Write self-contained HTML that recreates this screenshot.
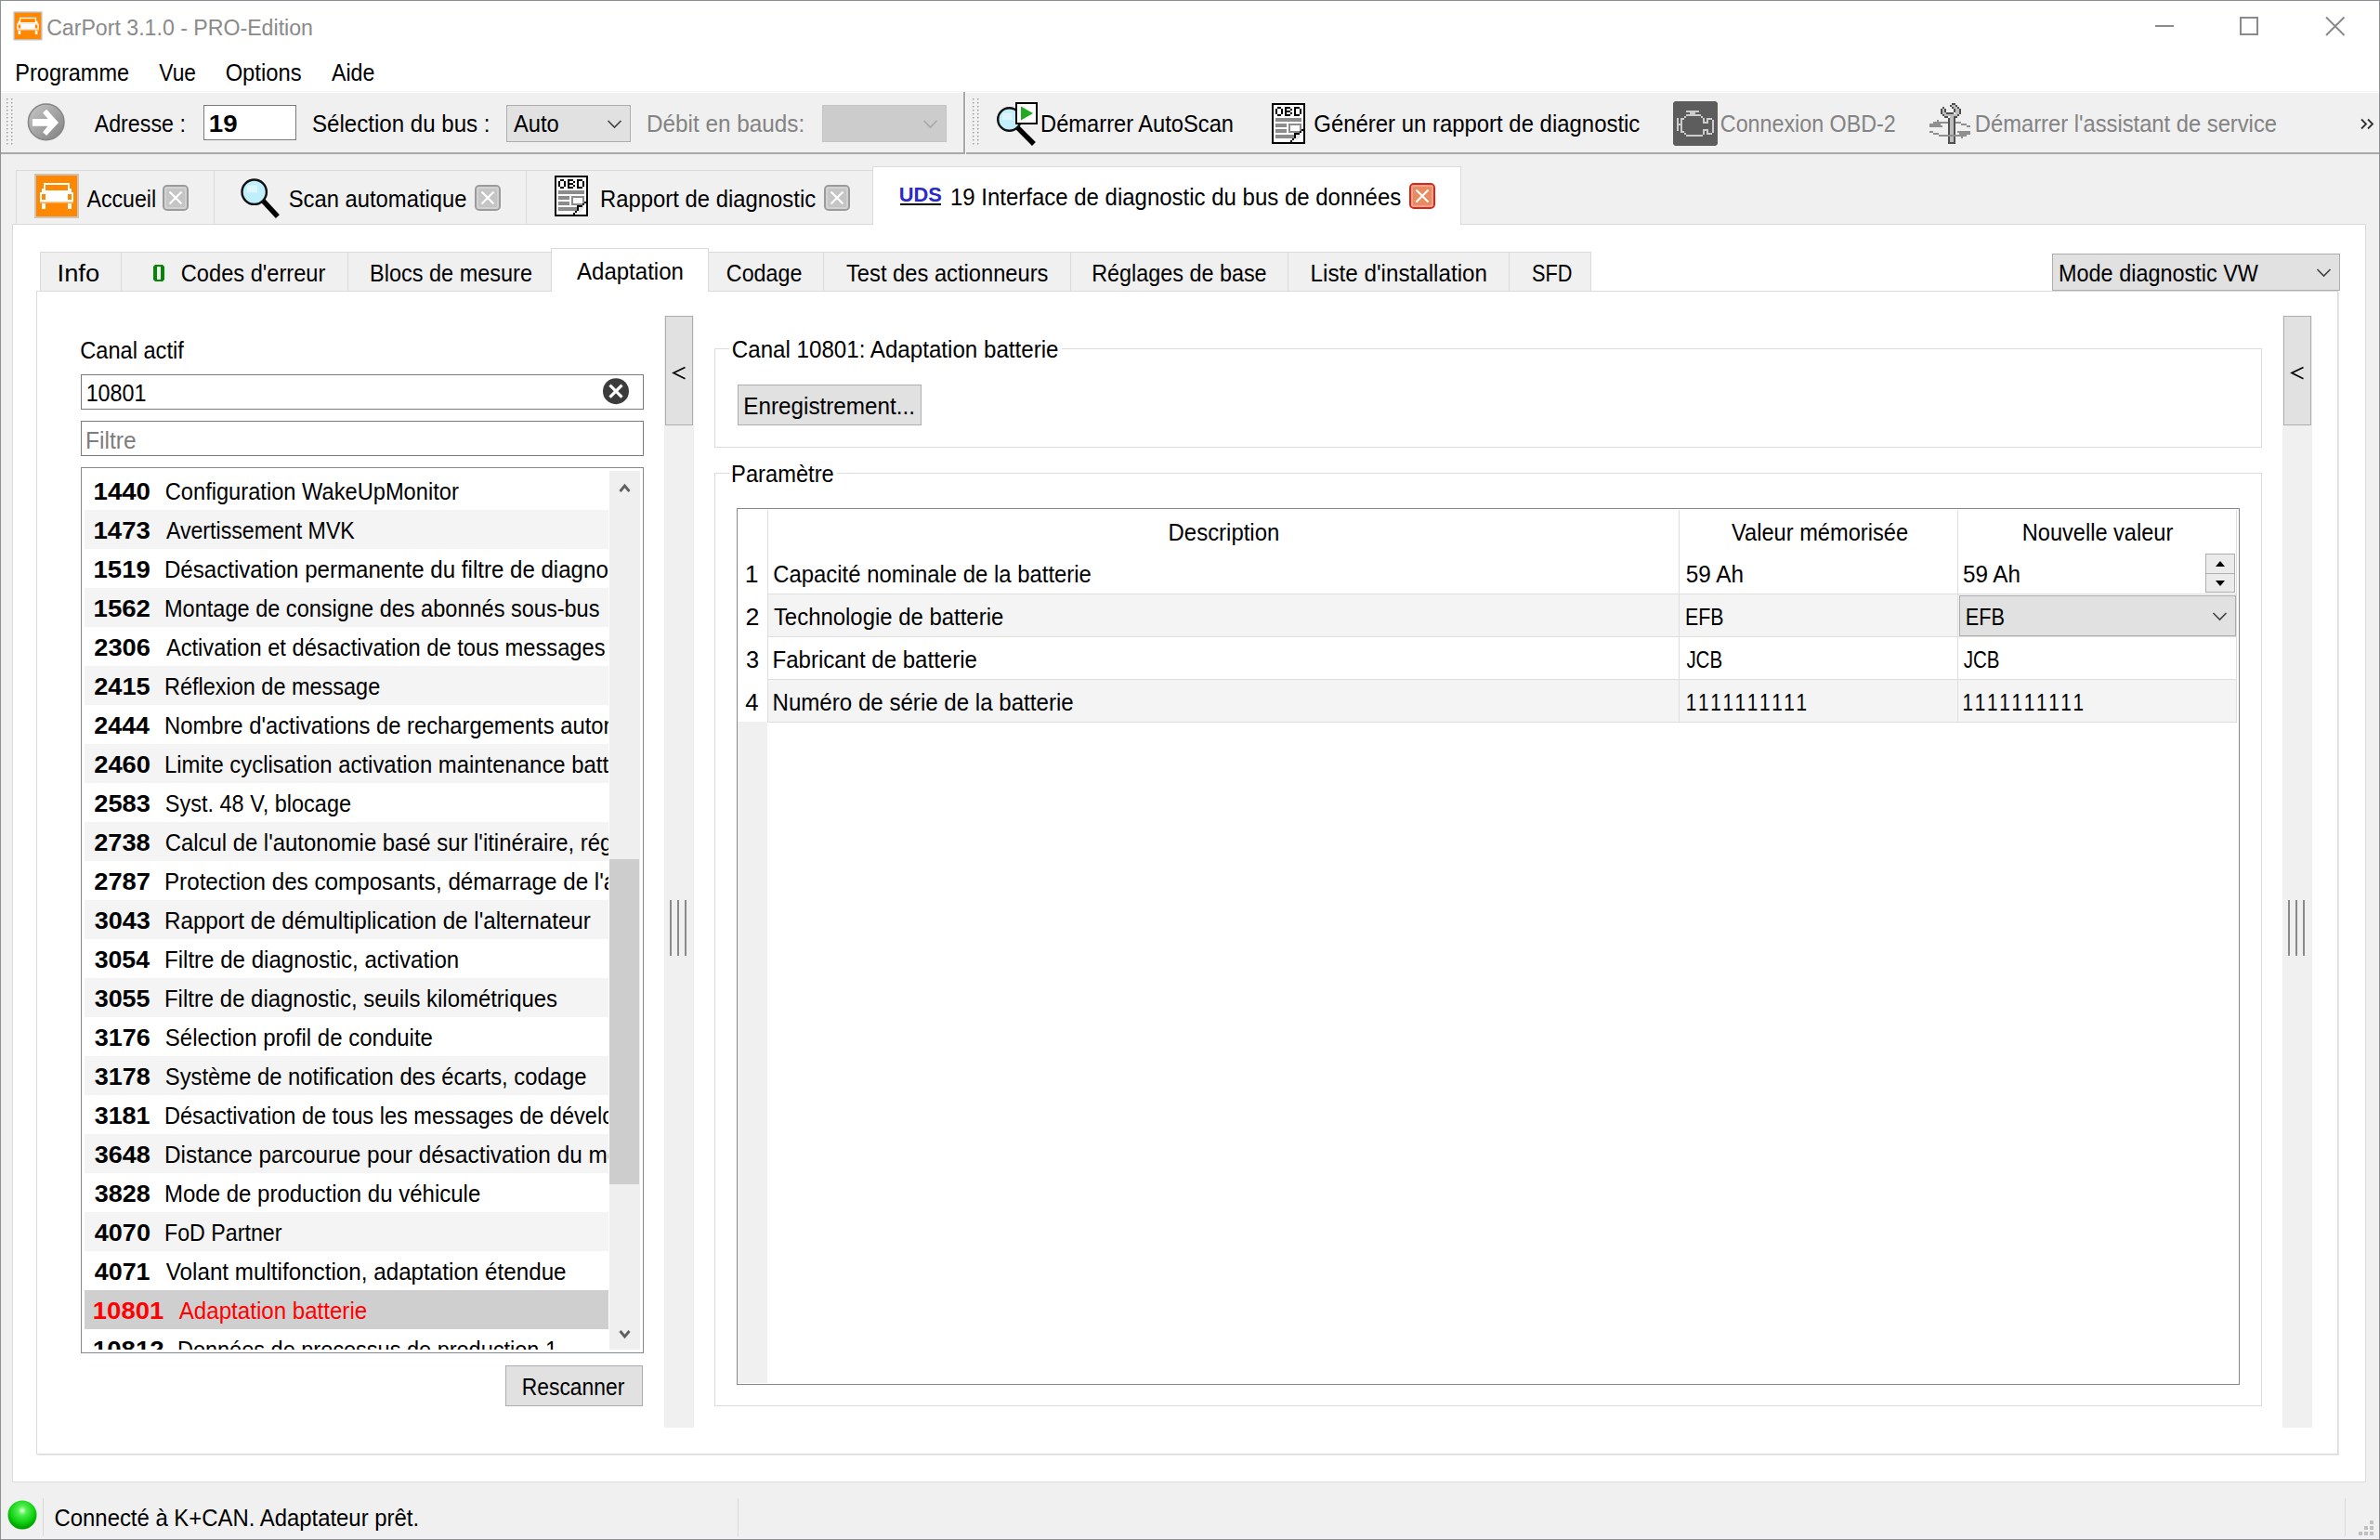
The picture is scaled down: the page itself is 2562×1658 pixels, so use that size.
<!DOCTYPE html><html><head><meta charset="utf-8"><style>
html,body{margin:0;padding:0;width:2562px;height:1658px;overflow:hidden;background:#fff;}
body>div{position:absolute;box-sizing:border-box;}
svg{position:absolute;left:0;top:0;}
text{font-family:"Liberation Sans",sans-serif;}
</style></head><body>
<div style="left:0px;top:0px;width:2562px;height:1658px;background:#ffffff;"></div>
<div style="left:1px;top:99px;width:2560px;height:1558px;background:#f0f0f0;"></div>
<div style="left:2320px;top:27px;width:20px;height:2px;background:#8a8a8a;"></div>
<div style="left:1px;top:98px;width:2560px;height:1px;background:#f3f3f3;"></div>
<div style="left:1px;top:99px;width:2560px;height:1px;background:#fdfdfd;"></div>
<div style="left:1px;top:164px;width:1037px;height:2px;background:#a8a8a8;"></div>
<div style="left:1040px;top:164px;width:1521px;height:2px;background:#a8a8a8;"></div>
<div style="left:1037px;top:99px;width:2px;height:67px;background:#a8a8a8;"></div>
<div style="left:1039px;top:99px;width:1px;height:67px;background:#ffffff;"></div>
<div style="left:219px;top:113px;width:100px;height:38px;background:#ffffff;border:1px solid #7a7a7a;"></div>
<div style="left:545px;top:113px;width:134px;height:40px;background:#e1e1e1;border:1px solid #adadad;"></div>
<div style="left:885px;top:113px;width:134px;height:40px;background:#cccccc;border:1px solid #c4c4c4;"></div>
<div style="left:13px;top:241px;width:2534px;height:1355px;background:#ffffff;border:1px solid #dadada;"></div>
<div style="left:17px;top:183px;width:923px;height:59px;background:#f0f0f0;"></div>
<div style="left:17px;top:183px;width:922px;height:1px;background:#dadada;"></div>
<div style="left:17px;top:183px;width:1px;height:58px;background:#dadada;"></div>
<div style="left:230px;top:184px;width:1px;height:57px;background:#dadada;"></div>
<div style="left:566px;top:184px;width:1px;height:57px;background:#dadada;"></div>
<div style="left:13px;top:241px;width:926px;height:1px;background:#dadada;"></div>
<div style="left:939px;top:179px;width:634px;height:63px;background:#ffffff;"></div>
<div style="left:939px;top:179px;width:634px;height:1px;background:#dadada;"></div>
<div style="left:939px;top:179px;width:1px;height:63px;background:#dadada;"></div>
<div style="left:1572px;top:179px;width:1px;height:63px;background:#dadada;"></div>
<div style="left:969px;top:219px;width:44px;height:2px;background:#000000;"></div>
<div style="left:39px;top:313px;width:2478px;height:1253px;background:#ffffff;border:1px solid #dadada;"></div>
<div style="left:2517px;top:315px;width:1px;height:1252px;background:#e8e8e8;"></div>
<div style="left:41px;top:1566px;width:2477px;height:1px;background:#e8e8e8;"></div>
<div style="left:43px;top:271px;width:550px;height:43px;background:#f0f0f0;"></div>
<div style="left:762px;top:271px;width:951px;height:43px;background:#f0f0f0;"></div>
<div style="left:43px;top:271px;width:550px;height:1px;background:#dadada;"></div>
<div style="left:762px;top:271px;width:951px;height:1px;background:#dadada;"></div>
<div style="left:43px;top:271px;width:1px;height:42px;background:#dadada;"></div>
<div style="left:130px;top:271px;width:1px;height:42px;background:#dadada;"></div>
<div style="left:374px;top:271px;width:1px;height:42px;background:#dadada;"></div>
<div style="left:886px;top:271px;width:1px;height:42px;background:#dadada;"></div>
<div style="left:1152px;top:271px;width:1px;height:42px;background:#dadada;"></div>
<div style="left:1386px;top:271px;width:1px;height:42px;background:#dadada;"></div>
<div style="left:1624px;top:271px;width:1px;height:42px;background:#dadada;"></div>
<div style="left:1712px;top:271px;width:1px;height:42px;background:#dadada;"></div>
<div style="left:39px;top:313px;width:2478px;height:1px;background:#dadada;"></div>
<div style="left:593px;top:267px;width:170px;height:47px;background:#ffffff;"></div>
<div style="left:593px;top:267px;width:170px;height:1px;background:#dadada;"></div>
<div style="left:593px;top:267px;width:1px;height:47px;background:#dadada;"></div>
<div style="left:762px;top:267px;width:1px;height:47px;background:#dadada;"></div>
<div style="left:2209px;top:273px;width:310px;height:40px;background:#e1e1e1;border:1px solid #adadad;"></div>
<div style="left:87px;top:403px;width:606px;height:38px;background:#ffffff;border:1px solid #7a7a7a;"></div>
<div style="left:87px;top:453px;width:606px;height:38px;background:#ffffff;border:1px solid #7a7a7a;"></div>
<div style="left:87px;top:503px;width:606px;height:954px;background:#ffffff;border:1px solid #828790;"></div>
<div style="left:91px;top:549px;width:564px;height:42px;background:#f4f4f4;"></div>
<div style="left:91px;top:633px;width:564px;height:42px;background:#f4f4f4;"></div>
<div style="left:91px;top:717px;width:564px;height:42px;background:#f4f4f4;"></div>
<div style="left:91px;top:801px;width:564px;height:42px;background:#f4f4f4;"></div>
<div style="left:91px;top:885px;width:564px;height:42px;background:#f4f4f4;"></div>
<div style="left:91px;top:969px;width:564px;height:42px;background:#f4f4f4;"></div>
<div style="left:91px;top:1053px;width:564px;height:42px;background:#f4f4f4;"></div>
<div style="left:91px;top:1137px;width:564px;height:42px;background:#f4f4f4;"></div>
<div style="left:91px;top:1221px;width:564px;height:42px;background:#f4f4f4;"></div>
<div style="left:91px;top:1305px;width:564px;height:42px;background:#f4f4f4;"></div>
<div style="left:91px;top:1389px;width:564px;height:42px;background:#cfcfcf;"></div>
<div style="left:656px;top:507px;width:33px;height:946px;background:#efefef;"></div>
<div style="left:656px;top:925px;width:32px;height:350px;background:#cdcdcd;"></div>
<div style="left:544px;top:1470px;width:148px;height:44px;background:#e1e1e1;border:1px solid #adadad;"></div>
<div style="left:715px;top:340px;width:32px;height:1197px;background:#f0f0f0;"></div>
<div style="left:716px;top:340px;width:30px;height:118px;background:#e1e1e1;border:1px solid #adadad;"></div>
<div style="left:721px;top:969px;width:2px;height:60px;background:#8a8a8a;"></div>
<div style="left:729px;top:969px;width:2px;height:60px;background:#8a8a8a;"></div>
<div style="left:737px;top:969px;width:2px;height:60px;background:#8a8a8a;"></div>
<div style="left:2457px;top:340px;width:32px;height:1197px;background:#f0f0f0;"></div>
<div style="left:2458px;top:340px;width:30px;height:118px;background:#e1e1e1;border:1px solid #adadad;"></div>
<div style="left:2463px;top:969px;width:2px;height:60px;background:#8a8a8a;"></div>
<div style="left:2471px;top:969px;width:2px;height:60px;background:#8a8a8a;"></div>
<div style="left:2479px;top:969px;width:2px;height:60px;background:#8a8a8a;"></div>
<div style="left:769px;top:375px;width:1666px;height:107px;border:1px solid #dcdcdc;"></div>
<div style="left:785px;top:370px;width:358px;height:10px;background:#ffffff;"></div>
<div style="left:794px;top:414px;width:198px;height:44px;background:#e1e1e1;border:1px solid #adadad;"></div>
<div style="left:769px;top:509px;width:1666px;height:1005px;border:1px solid #dcdcdc;"></div>
<div style="left:785px;top:504px;width:116px;height:10px;background:#ffffff;"></div>
<div style="left:793px;top:547px;width:1618px;height:944px;background:#ffffff;border:1px solid #828790;"></div>
<div style="left:794px;top:777px;width:32px;height:712px;background:#f0f0f0;"></div>
<div style="left:827px;top:640px;width:1581px;height:45px;background:#f4f4f4;"></div>
<div style="left:827px;top:732px;width:1581px;height:45px;background:#f4f4f4;"></div>
<div style="left:827px;top:639px;width:1581px;height:1px;background:#dedede;"></div>
<div style="left:827px;top:685px;width:1581px;height:1px;background:#dedede;"></div>
<div style="left:827px;top:731px;width:1581px;height:1px;background:#dedede;"></div>
<div style="left:827px;top:777px;width:1581px;height:1px;background:#dedede;"></div>
<div style="left:826px;top:549px;width:1px;height:229px;background:#dedede;"></div>
<div style="left:1807px;top:549px;width:1px;height:229px;background:#dedede;"></div>
<div style="left:2107px;top:549px;width:1px;height:229px;background:#dedede;"></div>
<div style="left:2407px;top:549px;width:1px;height:229px;background:#dedede;"></div>
<div style="left:2374px;top:596px;width:32px;height:42px;background:#ebebeb;border:1px solid #adadad;"></div>
<div style="left:2375px;top:617px;width:30px;height:1px;background:#adadad;"></div>
<div style="left:2109px;top:641px;width:298px;height:44px;background:#e1e1e1;border:1px solid #adadad;"></div>
<div style="left:46px;top:1613px;width:1px;height:41px;background:#d9d9d9;"></div>
<div style="left:794px;top:1613px;width:1px;height:41px;background:#d9d9d9;"></div>
<div style="left:2524px;top:1613px;width:1px;height:41px;background:#d9d9d9;"></div>
<div style="left:2551px;top:1637px;width:4px;height:4px;background:#c0c0c0;"></div>
<div style="left:2545px;top:1643px;width:4px;height:4px;background:#c0c0c0;"></div>
<div style="left:2551px;top:1643px;width:4px;height:4px;background:#c0c0c0;"></div>
<div style="left:2539px;top:1649px;width:4px;height:4px;background:#c0c0c0;"></div>
<div style="left:2545px;top:1649px;width:4px;height:4px;background:#c0c0c0;"></div>
<div style="left:2551px;top:1649px;width:4px;height:4px;background:#c0c0c0;"></div>
<div style="left:0px;top:0px;width:2562px;height:1px;background:#8e8e95;"></div>
<div style="left:0px;top:0px;width:1px;height:1658px;background:#8e8e95;"></div>
<div style="left:2561px;top:0px;width:1px;height:1658px;background:#8e8e95;"></div>
<div style="left:0px;top:1657px;width:2562px;height:1px;background:#8e8e95;"></div>
<svg width="2562" height="1658" viewBox="0 0 2562 1658">
<g transform="translate(14.4,12.3) scale(0.65)"><rect x="0" y="0" width="48" height="48" fill="#c2c8d0"/><rect x="2" y="2" width="44" height="44" fill="#ff8800"/><g fill="#fff" transform="translate(2,2)"><rect x="10" y="8" width="24" height="2"/><rect x="8" y="8" width="2" height="8"/><rect x="34" y="8" width="2" height="8"/><rect x="6" y="14" width="2" height="4"/><rect x="36" y="14" width="2" height="4"/><rect x="6" y="16" width="32" height="2"/><rect x="4" y="18" width="36" height="10"/><rect x="6" y="30" width="4" height="6"/><rect x="34" y="30" width="4" height="6"/></g><g fill="#ff8800" transform="translate(2,2)"><rect x="6" y="20" width="4" height="6"/><rect x="34" y="20" width="4" height="6"/></g><g fill="#ffc890" transform="translate(2,2)"><rect x="4" y="28" width="36" height="1.5"/></g></g>
<text x="50.14" y="37.80" font-size="24.42" fill="#8a8a8a" textLength="286.82" lengthAdjust="spacingAndGlyphs">CarPort 3.1.0 - PRO-Edition</text>
<rect x="2412" y="19" width="18" height="18" fill="none" stroke="#8a8a8a" stroke-width="2"/>
<path d="M2504,18.5 L2523.5,38 M2523.5,18.5 L2504,38" stroke="#8a8a8a" stroke-width="2" fill="none"/>
<text x="16.32" y="87.00" font-size="26.16" fill="#000" textLength="122.80" lengthAdjust="spacingAndGlyphs">Programme</text>
<text x="171.29" y="87.00" font-size="26.16" fill="#000" textLength="39.68" lengthAdjust="spacingAndGlyphs">Vue</text>
<text x="242.63" y="87.00" font-size="26.16" fill="#000" textLength="81.93" lengthAdjust="spacingAndGlyphs">Options</text>
<text x="357.00" y="87.00" font-size="26.16" fill="#000" textLength="46.36" lengthAdjust="spacingAndGlyphs">Aide</text>
<g fill="#a0a0a0"><rect x="7" y="106" width="1.5" height="1.5"/><rect x="12" y="106" width="1.5" height="1.5"/><rect x="7" y="110" width="1.5" height="1.5"/><rect x="12" y="110" width="1.5" height="1.5"/><rect x="7" y="114" width="1.5" height="1.5"/><rect x="12" y="114" width="1.5" height="1.5"/><rect x="7" y="118" width="1.5" height="1.5"/><rect x="12" y="118" width="1.5" height="1.5"/><rect x="7" y="122" width="1.5" height="1.5"/><rect x="12" y="122" width="1.5" height="1.5"/><rect x="7" y="126" width="1.5" height="1.5"/><rect x="12" y="126" width="1.5" height="1.5"/><rect x="7" y="130" width="1.5" height="1.5"/><rect x="12" y="130" width="1.5" height="1.5"/><rect x="7" y="134" width="1.5" height="1.5"/><rect x="12" y="134" width="1.5" height="1.5"/><rect x="7" y="138" width="1.5" height="1.5"/><rect x="12" y="138" width="1.5" height="1.5"/><rect x="7" y="142" width="1.5" height="1.5"/><rect x="12" y="142" width="1.5" height="1.5"/><rect x="7" y="146" width="1.5" height="1.5"/><rect x="12" y="146" width="1.5" height="1.5"/><rect x="7" y="150" width="1.5" height="1.5"/><rect x="12" y="150" width="1.5" height="1.5"/><rect x="7" y="154" width="1.5" height="1.5"/><rect x="12" y="154" width="1.5" height="1.5"/></g>
<g fill="#ffffff"><rect x="8.5" y="107.5" width="1" height="1"/><rect x="13.5" y="107.5" width="1" height="1"/><rect x="8.5" y="111.5" width="1" height="1"/><rect x="13.5" y="111.5" width="1" height="1"/><rect x="8.5" y="115.5" width="1" height="1"/><rect x="13.5" y="115.5" width="1" height="1"/><rect x="8.5" y="119.5" width="1" height="1"/><rect x="13.5" y="119.5" width="1" height="1"/><rect x="8.5" y="123.5" width="1" height="1"/><rect x="13.5" y="123.5" width="1" height="1"/><rect x="8.5" y="127.5" width="1" height="1"/><rect x="13.5" y="127.5" width="1" height="1"/><rect x="8.5" y="131.5" width="1" height="1"/><rect x="13.5" y="131.5" width="1" height="1"/><rect x="8.5" y="135.5" width="1" height="1"/><rect x="13.5" y="135.5" width="1" height="1"/><rect x="8.5" y="139.5" width="1" height="1"/><rect x="13.5" y="139.5" width="1" height="1"/><rect x="8.5" y="143.5" width="1" height="1"/><rect x="13.5" y="143.5" width="1" height="1"/><rect x="8.5" y="147.5" width="1" height="1"/><rect x="13.5" y="147.5" width="1" height="1"/><rect x="8.5" y="151.5" width="1" height="1"/><rect x="13.5" y="151.5" width="1" height="1"/><rect x="8.5" y="155.5" width="1" height="1"/><rect x="13.5" y="155.5" width="1" height="1"/></g>
<g fill="#a0a0a0"><rect x="1047" y="106" width="1.5" height="1.5"/><rect x="1052" y="106" width="1.5" height="1.5"/><rect x="1047" y="110" width="1.5" height="1.5"/><rect x="1052" y="110" width="1.5" height="1.5"/><rect x="1047" y="114" width="1.5" height="1.5"/><rect x="1052" y="114" width="1.5" height="1.5"/><rect x="1047" y="118" width="1.5" height="1.5"/><rect x="1052" y="118" width="1.5" height="1.5"/><rect x="1047" y="122" width="1.5" height="1.5"/><rect x="1052" y="122" width="1.5" height="1.5"/><rect x="1047" y="126" width="1.5" height="1.5"/><rect x="1052" y="126" width="1.5" height="1.5"/><rect x="1047" y="130" width="1.5" height="1.5"/><rect x="1052" y="130" width="1.5" height="1.5"/><rect x="1047" y="134" width="1.5" height="1.5"/><rect x="1052" y="134" width="1.5" height="1.5"/><rect x="1047" y="138" width="1.5" height="1.5"/><rect x="1052" y="138" width="1.5" height="1.5"/><rect x="1047" y="142" width="1.5" height="1.5"/><rect x="1052" y="142" width="1.5" height="1.5"/><rect x="1047" y="146" width="1.5" height="1.5"/><rect x="1052" y="146" width="1.5" height="1.5"/><rect x="1047" y="150" width="1.5" height="1.5"/><rect x="1052" y="150" width="1.5" height="1.5"/><rect x="1047" y="154" width="1.5" height="1.5"/><rect x="1052" y="154" width="1.5" height="1.5"/></g>
<g fill="#ffffff"><rect x="1048.5" y="107.5" width="1" height="1"/><rect x="1053.5" y="107.5" width="1" height="1"/><rect x="1048.5" y="111.5" width="1" height="1"/><rect x="1053.5" y="111.5" width="1" height="1"/><rect x="1048.5" y="115.5" width="1" height="1"/><rect x="1053.5" y="115.5" width="1" height="1"/><rect x="1048.5" y="119.5" width="1" height="1"/><rect x="1053.5" y="119.5" width="1" height="1"/><rect x="1048.5" y="123.5" width="1" height="1"/><rect x="1053.5" y="123.5" width="1" height="1"/><rect x="1048.5" y="127.5" width="1" height="1"/><rect x="1053.5" y="127.5" width="1" height="1"/><rect x="1048.5" y="131.5" width="1" height="1"/><rect x="1053.5" y="131.5" width="1" height="1"/><rect x="1048.5" y="135.5" width="1" height="1"/><rect x="1053.5" y="135.5" width="1" height="1"/><rect x="1048.5" y="139.5" width="1" height="1"/><rect x="1053.5" y="139.5" width="1" height="1"/><rect x="1048.5" y="143.5" width="1" height="1"/><rect x="1053.5" y="143.5" width="1" height="1"/><rect x="1048.5" y="147.5" width="1" height="1"/><rect x="1053.5" y="147.5" width="1" height="1"/><rect x="1048.5" y="151.5" width="1" height="1"/><rect x="1053.5" y="151.5" width="1" height="1"/><rect x="1048.5" y="155.5" width="1" height="1"/><rect x="1053.5" y="155.5" width="1" height="1"/></g>
<defs><linearGradient id="ga" x1="0" y1="0" x2="1" y2="1"><stop offset="0" stop-color="#c8c8c8"/><stop offset="1" stop-color="#808080"/></linearGradient><radialGradient id="led" cx="0.5" cy="0.35" r="0.6"><stop offset="0" stop-color="#e0ffe0"/><stop offset="0.25" stop-color="#50f050"/><stop offset="0.7" stop-color="#10d010"/><stop offset="1" stop-color="#00a000"/></radialGradient><radialGradient id="lens" cx="0.4" cy="0.35" r="0.7"><stop offset="0" stop-color="#ffffff"/><stop offset="0.5" stop-color="#c8eefc"/><stop offset="1" stop-color="#8fd0ee"/></radialGradient></defs>
<circle cx="49.7" cy="131.4" r="19.3" fill="url(#ga)" stroke="#858585" stroke-width="1.5"/>
<path d="M34.9,128.1 L51.5,128.1 L46,121.5 L50.1,117.7 L63,131.9 L50.1,146.1 L46,142.3 L51.5,135.7 L34.9,135.7 Z" fill="#ffffff"/>
<text x="101.70" y="142.00" font-size="26.16" fill="#000" textLength="98.17" lengthAdjust="spacingAndGlyphs">Adresse :</text>
<text x="224.84" y="142.00" font-size="26.16" font-weight="bold" fill="#000" textLength="30.79" lengthAdjust="spacingAndGlyphs">19</text>
<text x="335.92" y="142.00" font-size="26.16" fill="#000" textLength="191.65" lengthAdjust="spacingAndGlyphs">Sélection du bus :</text>
<text x="553.00" y="142.00" font-size="26.16" fill="#000" textLength="48.80" lengthAdjust="spacingAndGlyphs">Auto</text>
<path d="M654.5,130.0 L661.5,137.0 L668.5,130.0" fill="none" stroke="#404040" stroke-width="1.6"/>
<text x="696.06" y="142.00" font-size="26.16" fill="#838383" textLength="170.13" lengthAdjust="spacingAndGlyphs">Débit en bauds:</text>
<path d="M994.5,130.0 L1001.5,137.0 L1008.5,130.0" fill="none" stroke="#a8a8a8" stroke-width="1.6"/>
<path d="M1095.356,137.356 L1111,153" stroke="#000" stroke-width="5.5" stroke-linecap="square"/>
<circle cx="1086.5" cy="128.5" r="12.3" fill="#c0eefa" stroke="#111" stroke-width="2.4"/>
<rect x="1079.12" y="121.735" width="10.455" height="7.38" fill="#ddf6fc"/>
<rect x="1094" y="111" width="22" height="22" fill="#fff" stroke="#000" stroke-width="2"/>
<path d="M1099,114.5 L1112,122 L1099,129.5 Z" fill="#22aa22"/>
<text x="1120.11" y="142.00" font-size="26.16" fill="#000" textLength="207.86" lengthAdjust="spacingAndGlyphs">Démarrer AutoScan</text>
<g transform="translate(1369,111)" shape-rendering="crispEdges"><rect x="0" y="0" width="36" height="44" fill="#000"/><rect x="2" y="2" width="32" height="40" fill="#fff"/><g fill="#000"><rect x="6" y="4" width="4" height="2"/><rect x="4" y="6" width="2" height="6"/><rect x="10" y="6" width="2" height="6"/><rect x="6" y="12" width="4" height="2"/><rect x="14" y="4" width="2" height="10"/><rect x="16" y="4" width="4" height="2"/><rect x="16" y="8" width="4" height="2"/><rect x="16" y="12" width="4" height="2"/><rect x="20" y="6" width="2" height="2"/><rect x="20" y="10" width="2" height="2"/><rect x="24" y="4" width="2" height="10"/><rect x="26" y="4" width="4" height="2"/><rect x="26" y="12" width="4" height="2"/><rect x="30" y="6" width="2" height="6"/></g><g fill="#8c8c8c"><rect x="4" y="16" width="28" height="3.5"/><rect x="4" y="22" width="12" height="3.5"/><rect x="4" y="28" width="12" height="3.5"/><rect x="4" y="34" width="20" height="3.5"/><rect x="18" y="22" width="14" height="10"/></g><rect x="20" y="24" width="10" height="6" fill="#fff"/><path d="M26,34 L34,34 L34,42 L26,42 Z" fill="#e6e6e6"/><g fill="#000"><rect x="32" y="28" width="2" height="2"/><rect x="30" y="30" width="2" height="2"/><rect x="24" y="32" width="6" height="2"/><rect x="24" y="34" width="2" height="4"/><rect x="22" y="38" width="2" height="2"/><rect x="20" y="40" width="2" height="2"/></g><path d="M34,30 L34,42 L22,42 Z" fill="#fff"/><path d="M26,34 L32,34 L26,40 Z" fill="#e6e6e6"/><g fill="#000"><rect x="32" y="28" width="2" height="2"/><rect x="30" y="30" width="2" height="2"/><rect x="24" y="32" width="6" height="2"/><rect x="24" y="34" width="2" height="4"/><rect x="22" y="38" width="2" height="2"/><rect x="20" y="40" width="2" height="2"/><rect x="34" y="0" width="2" height="44"/><rect x="0" y="42" width="36" height="2"/></g></g>
<text x="1414.30" y="142.00" font-size="26.16" fill="#000" textLength="351.02" lengthAdjust="spacingAndGlyphs">Générer un rapport de diagnostic</text>
<path d="M1803,109 L1847,109 L1849,111 L1849,155 L1847,157 L1803,157 L1801,155 L1801,111 Z" fill="#5d5d5d"/>
<g transform="translate(1795,104) scale(1.0)" fill="#cccccc" shape-rendering="crispEdges"><rect x="20" y="15" width="14" height="2"/><rect x="24" y="17" width="6" height="2"/><rect x="20" y="19" width="16" height="2"/><rect x="18" y="21" width="2" height="2"/><rect x="14" y="23" width="4" height="2"/><rect x="14" y="25" width="2" height="14"/><rect x="14" y="37" width="4" height="2"/><rect x="18" y="39" width="2" height="2"/><rect x="20" y="41" width="18" height="2"/><rect x="10" y="23" width="2" height="14"/><rect x="12" y="29" width="2" height="2"/><rect x="36" y="21" width="2" height="2"/><rect x="38" y="23" width="2" height="6"/><rect x="40" y="27" width="2" height="2"/><rect x="42" y="23" width="2" height="6"/><rect x="44" y="23" width="4" height="2"/><rect x="48" y="25" width="2" height="14"/><rect x="44" y="39" width="4" height="2"/><rect x="38" y="35" width="2" height="6"/><rect x="40" y="35" width="2" height="2"/><rect x="42" y="35" width="2" height="6"/></g>
<text x="1851.84" y="142.00" font-size="26.16" fill="#838383" textLength="188.84" lengthAdjust="spacingAndGlyphs">Connexion OBD-2</text>
<g transform="translate(2070,104) scale(1.0)" fill="#8f8f8f" shape-rendering="crispEdges"><rect x="15" y="25" width="2" height="2"/><rect x="11" y="27" width="16" height="2"/><rect x="35" y="27" width="6" height="2"/><rect x="7" y="29" width="12" height="2"/><rect x="41" y="29" width="6" height="2"/><rect x="7" y="31" width="14" height="2"/><rect x="47" y="31" width="4" height="2"/></g>
<g transform="translate(2070,104) scale(1.0)" fill="#bdbdbd" shape-rendering="crispEdges"><rect x="21" y="13" width="2" height="6"/><rect x="23" y="17" width="2" height="2"/><rect x="23" y="19" width="14" height="2"/><rect x="35" y="13" width="4" height="6"/><rect x="33" y="11" width="4" height="2"/><rect x="31" y="9" width="4" height="2"/><rect x="29" y="21" width="4" height="28"/></g>
<g transform="translate(2070,104) scale(1.0)" fill="#505050" shape-rendering="crispEdges"><rect x="31" y="7" width="4" height="2"/><rect x="29" y="9" width="2" height="2"/><rect x="35" y="9" width="2" height="2"/><rect x="31" y="11" width="2" height="2"/><rect x="37" y="11" width="2" height="2"/><rect x="21" y="11" width="2" height="2"/><rect x="19" y="13" width="2" height="6"/><rect x="23" y="13" width="2" height="4"/><rect x="33" y="13" width="2" height="4"/><rect x="39" y="13" width="2" height="6"/><rect x="25" y="17" width="8" height="2"/><rect x="21" y="19" width="2" height="2"/><rect x="37" y="19" width="2" height="2"/><rect x="23" y="21" width="4" height="2"/><rect x="33" y="21" width="4" height="2"/><rect x="27" y="23" width="2" height="28"/><rect x="33" y="21" width="2" height="30"/><rect x="27" y="49" width="8" height="2"/></g>
<g transform="translate(2070,104) scale(1.0)" fill="#8f8f8f" shape-rendering="crispEdges"><rect x="7" y="37" width="4" height="2"/><rect x="11" y="39" width="6" height="2"/><rect x="17" y="41" width="30" height="2"/><rect x="37" y="37" width="14" height="2"/><rect x="39" y="39" width="12" height="2"/><rect x="41" y="43" width="2" height="2"/></g>
<text x="2125.80" y="142.00" font-size="26.16" fill="#838383" textLength="325.17" lengthAdjust="spacingAndGlyphs">Démarrer l'assistant de service</text>
<path d="M2542,128.5 L2547,133.5 L2542,138.5 M2549,128.5 L2554,133.5 L2549,138.5" fill="none" stroke="#303030" stroke-width="1.8"/>
<g transform="translate(37,187) scale(1.0)"><rect x="0" y="0" width="48" height="48" fill="#cdc3b8"/><rect x="2" y="2" width="44" height="44" fill="#ff8800"/><g fill="#fff" transform="translate(2,2)"><rect x="10" y="8" width="24" height="2"/><rect x="8" y="8" width="2" height="8"/><rect x="34" y="8" width="2" height="8"/><rect x="6" y="14" width="2" height="4"/><rect x="36" y="14" width="2" height="4"/><rect x="6" y="16" width="32" height="2"/><rect x="4" y="18" width="36" height="10"/><rect x="6" y="30" width="4" height="6"/><rect x="34" y="30" width="4" height="6"/></g><g fill="#ff8800" transform="translate(2,2)"><rect x="6" y="20" width="4" height="6"/><rect x="34" y="20" width="4" height="6"/></g><g fill="#ffc890" transform="translate(2,2)"><rect x="4" y="28" width="36" height="1.5"/></g></g>
<text x="93.50" y="222.60" font-size="26.16" fill="#000" textLength="74.59" lengthAdjust="spacingAndGlyphs">Accueil</text>
<rect x="176" y="200" width="26" height="26" rx="4" fill="#c5c5c5" stroke="#9a9a9a" stroke-width="2"/>
<rect x="178" y="202" width="22" height="22" rx="2" fill="none" stroke="#d2d2d2" stroke-width="2"/>
<path d="M182.5,206.5 L195.5,219.5 M195.5,206.5 L182.5,219.5" stroke="#fff" stroke-width="2.2"/>
<path d="M283.204,216.20399999999998 L297,231" stroke="#000" stroke-width="5.5" stroke-linecap="square"/>
<circle cx="273.7" cy="206.7" r="13.2" fill="#c0eefa" stroke="#111" stroke-width="2.4"/>
<rect x="265.78" y="199.44" width="11.219999999999999" height="7.919999999999999" fill="#ddf6fc"/>
<text x="310.73" y="222.60" font-size="26.16" fill="#000" textLength="191.75" lengthAdjust="spacingAndGlyphs">Scan automatique</text>
<rect x="512" y="200" width="26" height="26" rx="4" fill="#c5c5c5" stroke="#9a9a9a" stroke-width="2"/>
<rect x="514" y="202" width="22" height="22" rx="2" fill="none" stroke="#d2d2d2" stroke-width="2"/>
<path d="M518.5,206.5 L531.5,219.5 M531.5,206.5 L518.5,219.5" stroke="#fff" stroke-width="2.2"/>
<g transform="translate(597,189)" shape-rendering="crispEdges"><rect x="0" y="0" width="36" height="44" fill="#000"/><rect x="2" y="2" width="32" height="40" fill="#fff"/><g fill="#000"><rect x="6" y="4" width="4" height="2"/><rect x="4" y="6" width="2" height="6"/><rect x="10" y="6" width="2" height="6"/><rect x="6" y="12" width="4" height="2"/><rect x="14" y="4" width="2" height="10"/><rect x="16" y="4" width="4" height="2"/><rect x="16" y="8" width="4" height="2"/><rect x="16" y="12" width="4" height="2"/><rect x="20" y="6" width="2" height="2"/><rect x="20" y="10" width="2" height="2"/><rect x="24" y="4" width="2" height="10"/><rect x="26" y="4" width="4" height="2"/><rect x="26" y="12" width="4" height="2"/><rect x="30" y="6" width="2" height="6"/></g><g fill="#8c8c8c"><rect x="4" y="16" width="28" height="3.5"/><rect x="4" y="22" width="12" height="3.5"/><rect x="4" y="28" width="12" height="3.5"/><rect x="4" y="34" width="20" height="3.5"/><rect x="18" y="22" width="14" height="10"/></g><rect x="20" y="24" width="10" height="6" fill="#fff"/><path d="M26,34 L34,34 L34,42 L26,42 Z" fill="#e6e6e6"/><g fill="#000"><rect x="32" y="28" width="2" height="2"/><rect x="30" y="30" width="2" height="2"/><rect x="24" y="32" width="6" height="2"/><rect x="24" y="34" width="2" height="4"/><rect x="22" y="38" width="2" height="2"/><rect x="20" y="40" width="2" height="2"/></g><path d="M34,30 L34,42 L22,42 Z" fill="#fff"/><path d="M26,34 L32,34 L26,40 Z" fill="#e6e6e6"/><g fill="#000"><rect x="32" y="28" width="2" height="2"/><rect x="30" y="30" width="2" height="2"/><rect x="24" y="32" width="6" height="2"/><rect x="24" y="34" width="2" height="4"/><rect x="22" y="38" width="2" height="2"/><rect x="20" y="40" width="2" height="2"/><rect x="34" y="0" width="2" height="44"/><rect x="0" y="42" width="36" height="2"/></g></g>
<text x="646.09" y="222.60" font-size="26.16" fill="#000" textLength="232.07" lengthAdjust="spacingAndGlyphs">Rapport de diagnostic</text>
<rect x="888" y="200" width="26" height="26" rx="4" fill="#c5c5c5" stroke="#9a9a9a" stroke-width="2"/>
<rect x="890" y="202" width="22" height="22" rx="2" fill="none" stroke="#d2d2d2" stroke-width="2"/>
<path d="M894.5,206.5 L907.5,219.5 M907.5,206.5 L894.5,219.5" stroke="#fff" stroke-width="2.2"/>
<text x="967.69" y="216.60" font-size="22.24" font-weight="bold" fill="#2a2ac8" textLength="46.11" lengthAdjust="spacingAndGlyphs">UDS</text>
<text x="1022.90" y="220.50" font-size="26.16" fill="#000" textLength="485.38" lengthAdjust="spacingAndGlyphs">19 Interface de diagnostic du bus de données</text>
<rect x="1518" y="198" width="26" height="26" rx="4" fill="#e98b60" stroke="#d5271a" stroke-width="2"/>
<rect x="1520" y="200" width="22" height="22" rx="2" fill="none" stroke="#efa28f" stroke-width="2"/>
<path d="M1524.5,204.5 L1537.5,217.5 M1537.5,204.5 L1524.5,217.5" stroke="#fff" stroke-width="2.2"/>
<text x="61.54" y="302.60" font-size="26.16" fill="#000" textLength="45.64" lengthAdjust="spacingAndGlyphs">Info</text>
<path fill-rule="evenodd" fill="#078507" d="M167,285 L175,285 L177,287 L177,301 L175,303 L167,303 L165,301 L165,287 Z M169,287 L173,287 L173,301 L169,301 Z"/>
<text x="194.82" y="302.60" font-size="26.16" fill="#000" textLength="155.49" lengthAdjust="spacingAndGlyphs">Codes d'erreur</text>
<text x="398.12" y="302.60" font-size="26.16" fill="#000" textLength="174.89" lengthAdjust="spacingAndGlyphs">Blocs de mesure</text>
<text x="621.00" y="301.00" font-size="26.16" fill="#000" textLength="114.89" lengthAdjust="spacingAndGlyphs">Adaptation</text>
<text x="781.84" y="302.60" font-size="26.16" fill="#000" textLength="81.57" lengthAdjust="spacingAndGlyphs">Codage</text>
<text x="911.03" y="302.60" font-size="26.16" fill="#000" textLength="217.45" lengthAdjust="spacingAndGlyphs">Test des actionneurs</text>
<text x="1175.13" y="302.60" font-size="26.16" fill="#000" textLength="188.45" lengthAdjust="spacingAndGlyphs">Réglages de base</text>
<text x="1410.56" y="302.60" font-size="26.16" fill="#000" textLength="190.45" lengthAdjust="spacingAndGlyphs">Liste d'installation</text>
<text x="1649.02" y="302.60" font-size="26.16" fill="#000" textLength="43.46" lengthAdjust="spacingAndGlyphs">SFD</text>
<text x="2216.03" y="302.50" font-size="26.16" fill="#000" textLength="214.92" lengthAdjust="spacingAndGlyphs">Mode diagnostic VW</text>
<path d="M2494.5,290.0 L2501.5,297.0 L2508.5,290.0" fill="none" stroke="#404040" stroke-width="1.6"/>
<text x="86.22" y="386.00" font-size="26.16" fill="#000" textLength="111.57" lengthAdjust="spacingAndGlyphs">Canal actif</text>
<text x="92.65" y="432.00" font-size="26.16" fill="#000" textLength="64.82" lengthAdjust="spacingAndGlyphs">10801</text>
<circle cx="663" cy="421.2" r="14" fill="#3c3c3c"/>
<path d="M656.5,414.7 L669.5,427.7 M669.5,414.7 L656.5,427.7" stroke="#fff" stroke-width="3.2"/>
<text x="92.03" y="482.60" font-size="26.16" fill="#7d7d7d" textLength="54.60" lengthAdjust="spacingAndGlyphs">Filtre</text>
<clipPath id="lc"><rect x="91" y="507" width="564" height="946"/></clipPath>
<g clip-path="url(#lc)">
<text x="100.54" y="537.80" font-size="26.16" font-weight="bold" fill="#000" textLength="61.45" lengthAdjust="spacingAndGlyphs">1440</text>
<text x="177.72" y="537.80" font-size="26.16" fill="#000" textLength="316.10" lengthAdjust="spacingAndGlyphs">Configuration WakeUpMonitor</text>
<text x="100.55" y="579.80" font-size="26.16" font-weight="bold" fill="#000" textLength="61.31" lengthAdjust="spacingAndGlyphs">1473</text>
<text x="178.90" y="579.80" font-size="26.16" fill="#000" textLength="202.89" lengthAdjust="spacingAndGlyphs">Avertissement MVK</text>
<text x="100.55" y="621.80" font-size="26.16" font-weight="bold" fill="#000" textLength="61.31" lengthAdjust="spacingAndGlyphs">1519</text>
<text x="176.97" y="621.80" font-size="26.16" fill="#000" textLength="513.93" lengthAdjust="spacingAndGlyphs">Désactivation permanente du filtre de diagnostic</text>
<text x="100.54" y="663.80" font-size="26.16" font-weight="bold" fill="#000" textLength="61.45" lengthAdjust="spacingAndGlyphs">1562</text>
<text x="177.02" y="663.80" font-size="26.16" fill="#000" textLength="468.47" lengthAdjust="spacingAndGlyphs">Montage de consigne des abonnés sous-bus</text>
<text x="101.25" y="705.80" font-size="26.16" font-weight="bold" fill="#000" textLength="60.60" lengthAdjust="spacingAndGlyphs">2306</text>
<text x="178.90" y="705.80" font-size="26.16" fill="#000" textLength="472.65" lengthAdjust="spacingAndGlyphs">Activation et désactivation de tous messages</text>
<text x="101.25" y="747.80" font-size="26.16" font-weight="bold" fill="#000" textLength="60.32" lengthAdjust="spacingAndGlyphs">2415</text>
<text x="177.02" y="747.80" font-size="26.16" fill="#000" textLength="232.21" lengthAdjust="spacingAndGlyphs">Réflexion de message</text>
<text x="101.26" y="789.80" font-size="26.16" font-weight="bold" fill="#000" textLength="59.77" lengthAdjust="spacingAndGlyphs">2444</text>
<text x="177.00" y="789.80" font-size="26.16" fill="#000" textLength="569.02" lengthAdjust="spacingAndGlyphs">Nombre d'activations de rechargements automatiques</text>
<text x="101.24" y="831.80" font-size="26.16" font-weight="bold" fill="#000" textLength="60.74" lengthAdjust="spacingAndGlyphs">2460</text>
<text x="176.99" y="831.80" font-size="26.16" fill="#000" textLength="517.99" lengthAdjust="spacingAndGlyphs">Limite cyclisation activation maintenance batterie</text>
<text x="101.25" y="873.80" font-size="26.16" font-weight="bold" fill="#000" textLength="60.60" lengthAdjust="spacingAndGlyphs">2583</text>
<text x="177.84" y="873.80" font-size="26.16" fill="#000" textLength="200.19" lengthAdjust="spacingAndGlyphs">Syst. 48 V, blocage</text>
<text x="101.25" y="915.80" font-size="26.16" font-weight="bold" fill="#000" textLength="60.46" lengthAdjust="spacingAndGlyphs">2738</text>
<text x="177.71" y="915.80" font-size="26.16" fill="#000" textLength="551.86" lengthAdjust="spacingAndGlyphs">Calcul de l'autonomie basé sur l'itinéraire, régulation</text>
<text x="101.24" y="957.80" font-size="26.16" font-weight="bold" fill="#000" textLength="60.74" lengthAdjust="spacingAndGlyphs">2787</text>
<text x="176.96" y="957.80" font-size="26.16" fill="#000" textLength="588.65" lengthAdjust="spacingAndGlyphs">Protection des composants, démarrage de l'alternateur</text>
<text x="101.66" y="999.80" font-size="26.16" font-weight="bold" fill="#000" textLength="60.18" lengthAdjust="spacingAndGlyphs">3043</text>
<text x="176.97" y="999.80" font-size="26.16" fill="#000" textLength="458.89" lengthAdjust="spacingAndGlyphs">Rapport de démultiplication de l'alternateur</text>
<text x="101.67" y="1041.80" font-size="26.16" font-weight="bold" fill="#000" textLength="59.36" lengthAdjust="spacingAndGlyphs">3054</text>
<text x="176.97" y="1041.80" font-size="26.16" fill="#000" textLength="317.26" lengthAdjust="spacingAndGlyphs">Filtre de diagnostic, activation</text>
<text x="101.66" y="1083.80" font-size="26.16" font-weight="bold" fill="#000" textLength="59.90" lengthAdjust="spacingAndGlyphs">3055</text>
<text x="176.99" y="1083.80" font-size="26.16" fill="#000" textLength="423.05" lengthAdjust="spacingAndGlyphs">Filtre de diagnostic, seuils kilométriques</text>
<text x="101.66" y="1125.80" font-size="26.16" font-weight="bold" fill="#000" textLength="60.18" lengthAdjust="spacingAndGlyphs">3176</text>
<text x="177.82" y="1125.80" font-size="26.16" fill="#000" textLength="288.11" lengthAdjust="spacingAndGlyphs">Sélection profil de conduite</text>
<text x="101.66" y="1167.80" font-size="26.16" font-weight="bold" fill="#000" textLength="60.04" lengthAdjust="spacingAndGlyphs">3178</text>
<text x="177.83" y="1167.80" font-size="26.16" fill="#000" textLength="453.56" lengthAdjust="spacingAndGlyphs">Système de notification des écarts, codage</text>
<text x="101.66" y="1209.80" font-size="26.16" font-weight="bold" fill="#000" textLength="59.90" lengthAdjust="spacingAndGlyphs">3181</text>
<text x="177.02" y="1209.80" font-size="26.16" fill="#000" textLength="575.86" lengthAdjust="spacingAndGlyphs">Désactivation de tous les messages de développement</text>
<text x="101.66" y="1251.80" font-size="26.16" font-weight="bold" fill="#000" textLength="60.04" lengthAdjust="spacingAndGlyphs">3648</text>
<text x="176.95" y="1251.80" font-size="26.16" fill="#000" textLength="517.61" lengthAdjust="spacingAndGlyphs">Distance parcourue pour désactivation du mode</text>
<text x="101.66" y="1293.80" font-size="26.16" font-weight="bold" fill="#000" textLength="60.04" lengthAdjust="spacingAndGlyphs">3828</text>
<text x="176.98" y="1293.80" font-size="26.16" fill="#000" textLength="340.32" lengthAdjust="spacingAndGlyphs">Mode de production du véhicule</text>
<text x="101.79" y="1335.80" font-size="26.16" font-weight="bold" fill="#000" textLength="60.18" lengthAdjust="spacingAndGlyphs">4070</text>
<text x="177.04" y="1335.80" font-size="26.16" fill="#000" textLength="126.42" lengthAdjust="spacingAndGlyphs">FoD Partner</text>
<text x="101.80" y="1377.80" font-size="26.16" font-weight="bold" fill="#000" textLength="59.77" lengthAdjust="spacingAndGlyphs">4071</text>
<text x="178.78" y="1377.80" font-size="26.16" fill="#000" textLength="430.82" lengthAdjust="spacingAndGlyphs">Volant multifonction, adaptation étendue</text>
<text x="99.85" y="1419.80" font-size="26.16" font-weight="bold" fill="#ff0000" textLength="76.36" lengthAdjust="spacingAndGlyphs">10801</text>
<text x="192.80" y="1419.80" font-size="26.16" fill="#ff0000" textLength="202.37" lengthAdjust="spacingAndGlyphs">Adaptation batterie</text>
<text x="99.84" y="1461.80" font-size="26.16" font-weight="bold" fill="#000" textLength="76.78" lengthAdjust="spacingAndGlyphs">10812</text>
<text x="190.92" y="1461.80" font-size="26.16" fill="#000" textLength="409.16" lengthAdjust="spacingAndGlyphs">Données de processus de production 1</text>
</g>
<path d="M667.5,529 L672.5,523 L677.5,529" fill="none" stroke="#606060" stroke-width="2.8"/>
<path d="M667.5,1433 L672.5,1439 L677.5,1433" fill="none" stroke="#606060" stroke-width="2.8"/>
<text x="561.87" y="1501.50" font-size="26.16" fill="#000" textLength="110.38" lengthAdjust="spacingAndGlyphs">Rescanner</text>
<path d="M737.5,395.5 L725,401.6 L737.5,407.7" fill="none" stroke="#000" stroke-width="1.7"/>
<path d="M2479.5,395.5 L2467,401.6 L2479.5,407.7" fill="none" stroke="#000" stroke-width="1.7"/>
<text x="787.79" y="385.00" font-size="26.16" fill="#000" textLength="351.73" lengthAdjust="spacingAndGlyphs">Canal 10801: Adaptation batterie</text>
<text x="800.26" y="446.00" font-size="26.16" fill="#000" textLength="184.81" lengthAdjust="spacingAndGlyphs">Enregistrement...</text>
<text x="787.10" y="519.00" font-size="26.16" fill="#000" textLength="110.61" lengthAdjust="spacingAndGlyphs">Paramètre</text>
<text x="1257.59" y="581.70" font-size="26.16" fill="#000" textLength="119.70" lengthAdjust="spacingAndGlyphs">Description</text>
<text x="1864.08" y="581.70" font-size="26.16" fill="#000" textLength="189.97" lengthAdjust="spacingAndGlyphs">Valeur mémorisée</text>
<text x="2176.81" y="582.00" font-size="26.16" fill="#000" textLength="162.49" lengthAdjust="spacingAndGlyphs">Nouvelle valeur</text>
<text x="801.82" y="627.00" font-size="26.16" fill="#000" textLength="14.70" lengthAdjust="spacingAndGlyphs">1</text>
<text x="832.21" y="627.00" font-size="26.16" fill="#000" textLength="342.71" lengthAdjust="spacingAndGlyphs">Capacité nominale de la batterie</text>
<text x="1814.73" y="627.00" font-size="26.16" fill="#000" textLength="62.21" lengthAdjust="spacingAndGlyphs">59 Ah</text>
<text x="2113.03" y="627.00" font-size="26.16" fill="#000" textLength="62.00" lengthAdjust="spacingAndGlyphs">59 Ah</text>
<text x="802.46" y="672.90" font-size="26.16" fill="#000" textLength="14.91" lengthAdjust="spacingAndGlyphs">2</text>
<text x="832.92" y="672.90" font-size="26.16" fill="#000" textLength="247.36" lengthAdjust="spacingAndGlyphs">Technologie de batterie</text>
<text x="1813.99" y="672.90" font-size="26.16" fill="#000" textLength="41.58" lengthAdjust="spacingAndGlyphs">EFB</text>
<text x="802.91" y="718.80" font-size="26.16" fill="#000" textLength="14.14" lengthAdjust="spacingAndGlyphs">3</text>
<text x="831.48" y="718.80" font-size="26.16" fill="#000" textLength="220.43" lengthAdjust="spacingAndGlyphs">Fabricant de batterie</text>
<text x="1815.39" y="718.80" font-size="26.16" fill="#000" textLength="38.72" lengthAdjust="spacingAndGlyphs">JCB</text>
<text x="2113.69" y="718.80" font-size="26.16" fill="#000" textLength="38.82" lengthAdjust="spacingAndGlyphs">JCB</text>
<text x="802.28" y="764.70" font-size="26.16" fill="#000" textLength="14.40" lengthAdjust="spacingAndGlyphs">4</text>
<text x="831.47" y="764.70" font-size="26.16" fill="#000" textLength="324.24" lengthAdjust="spacingAndGlyphs">Numéro de série de la batterie</text>
<text x="1814.85" y="764.70" font-size="26.16" fill="#000" textLength="11.51" lengthAdjust="spacingAndGlyphs">1</text>
<text x="2112.45" y="764.70" font-size="26.16" fill="#000" textLength="11.51" lengthAdjust="spacingAndGlyphs">1</text>
<text x="1828.04" y="764.70" font-size="26.16" fill="#000" textLength="11.51" lengthAdjust="spacingAndGlyphs">1</text>
<text x="2125.69" y="764.70" font-size="26.16" fill="#000" textLength="11.51" lengthAdjust="spacingAndGlyphs">1</text>
<text x="1841.23" y="764.70" font-size="26.16" fill="#000" textLength="11.51" lengthAdjust="spacingAndGlyphs">1</text>
<text x="2138.93" y="764.70" font-size="26.16" fill="#000" textLength="11.51" lengthAdjust="spacingAndGlyphs">1</text>
<text x="1854.42" y="764.70" font-size="26.16" fill="#000" textLength="11.51" lengthAdjust="spacingAndGlyphs">1</text>
<text x="2152.17" y="764.70" font-size="26.16" fill="#000" textLength="11.51" lengthAdjust="spacingAndGlyphs">1</text>
<text x="1867.61" y="764.70" font-size="26.16" fill="#000" textLength="11.51" lengthAdjust="spacingAndGlyphs">1</text>
<text x="2165.41" y="764.70" font-size="26.16" fill="#000" textLength="11.51" lengthAdjust="spacingAndGlyphs">1</text>
<text x="1880.80" y="764.70" font-size="26.16" fill="#000" textLength="11.51" lengthAdjust="spacingAndGlyphs">1</text>
<text x="2178.65" y="764.70" font-size="26.16" fill="#000" textLength="11.51" lengthAdjust="spacingAndGlyphs">1</text>
<text x="1893.99" y="764.70" font-size="26.16" fill="#000" textLength="11.51" lengthAdjust="spacingAndGlyphs">1</text>
<text x="2191.89" y="764.70" font-size="26.16" fill="#000" textLength="11.51" lengthAdjust="spacingAndGlyphs">1</text>
<text x="1907.18" y="764.70" font-size="26.16" fill="#000" textLength="11.51" lengthAdjust="spacingAndGlyphs">1</text>
<text x="2205.13" y="764.70" font-size="26.16" fill="#000" textLength="11.51" lengthAdjust="spacingAndGlyphs">1</text>
<text x="1920.37" y="764.70" font-size="26.16" fill="#000" textLength="11.51" lengthAdjust="spacingAndGlyphs">1</text>
<text x="2218.37" y="764.70" font-size="26.16" fill="#000" textLength="11.51" lengthAdjust="spacingAndGlyphs">1</text>
<text x="1933.56" y="764.70" font-size="26.16" fill="#000" textLength="11.51" lengthAdjust="spacingAndGlyphs">1</text>
<text x="2231.61" y="764.70" font-size="26.16" fill="#000" textLength="11.51" lengthAdjust="spacingAndGlyphs">1</text>
<path d="M2385,610 L2390,604 L2395,610 Z" fill="#000"/>
<path d="M2385,625 L2390,631 L2395,625 Z" fill="#000"/>
<text x="2115.76" y="672.80" font-size="26.16" fill="#000" textLength="42.22" lengthAdjust="spacingAndGlyphs">EFB</text>
<path d="M2382.5,660.0 L2389.5,667.0 L2396.5,660.0" fill="none" stroke="#404040" stroke-width="1.6"/>
<circle cx="24" cy="1631" r="15.5" fill="url(#led)"/>
<text x="58.51" y="1642.70" font-size="26.16" fill="#000" textLength="392.58" lengthAdjust="spacingAndGlyphs">Connecté à K+CAN. Adaptateur prêt.</text>
</svg></body></html>
